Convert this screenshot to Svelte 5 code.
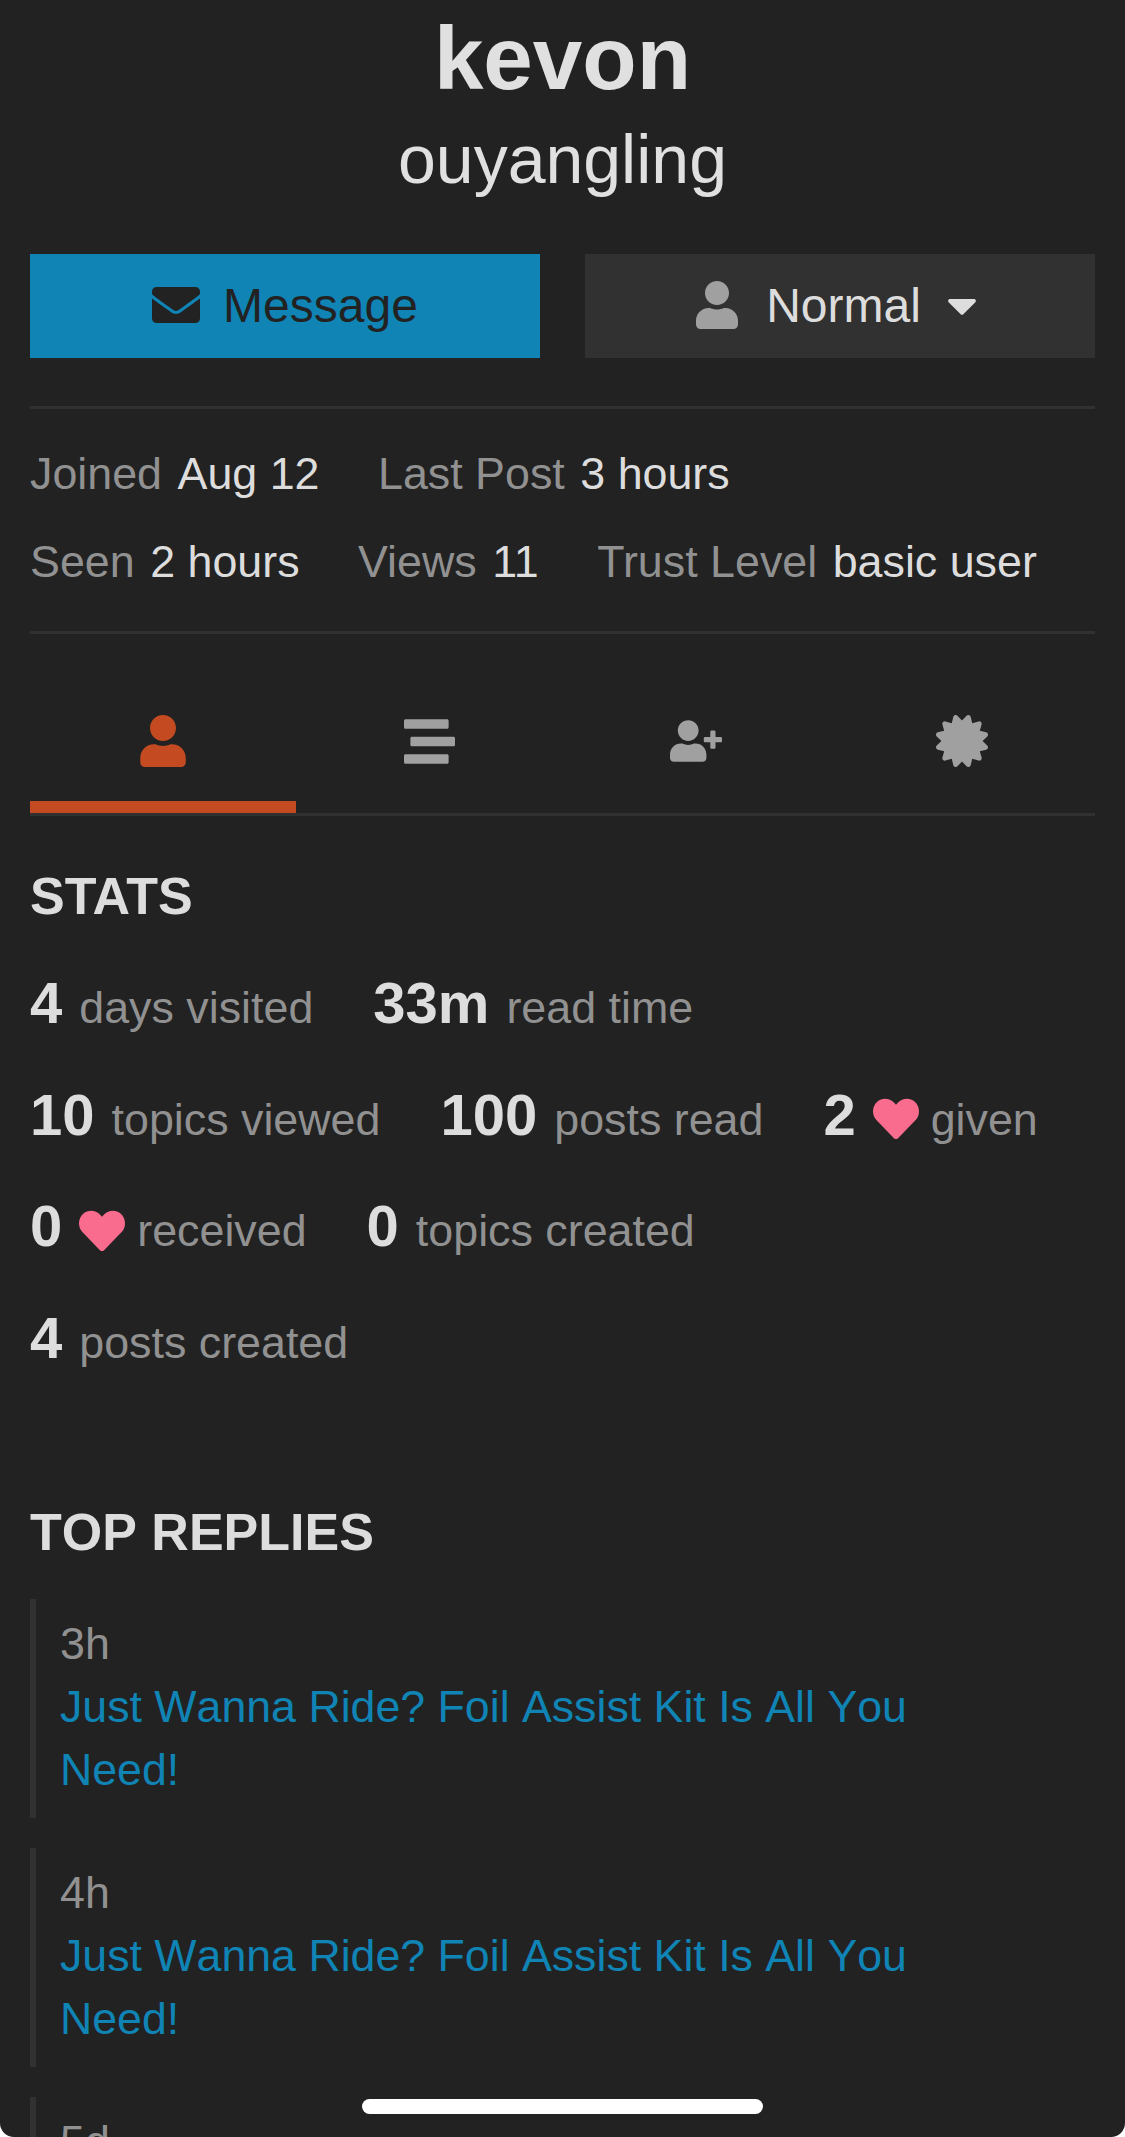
<script>
  const person = "M224 256c70.7 0 128-57.3 128-128S294.7 0 224 0 96 57.3 96 128s57.3 128 128 128zm89.6 32h-16.7c-22.2 10.2-46.9 16-72.9 16s-50.6-5.8-72.9-16h-16.7C60.2 288 0 348.2 0 422.4V464c0 26.5 21.5 48 48 48h352c26.5 0 48-21.5 48-48v-41.6c0-74.2-60.2-134.4-134.4-134.4z";
  const heart = "M462.3 62.6C407.5 15.9 326 24.3 275.7 76.2L256 96.5l-19.7-20.3C186.1 24.3 104.5 15.9 49.7 62.6c-62.8 53.6-66.1 149.8-9.9 207.9l193.5 199.8c12.5 12.9 32.8 12.9 45.3 0l193.5-199.8c56.3-58.1 53-154.3-9.8-207.9z";
  const badge = "M458.622 255.92l45.985-45.005c13.708-12.977 7.316-36.039-10.664-40.339l-62.65-15.99 17.661-62.015c4.991-17.838-11.829-34.663-29.661-29.671l-61.994 17.667-15.984-62.671C337.085.197 313.765-6.276 300.99 7.228L256 53.57 211.011 7.229c-12.63-13.351-36.047-7.234-40.325 10.668l-15.984 62.671-61.995-17.667C74.87 57.907 58.056 74.738 63.046 92.572l17.661 62.015-62.65 15.99C.069 174.878-6.31 197.944 7.392 210.915l45.985 45.005-45.985 45.004c-13.708 12.977-7.316 36.039 10.664 40.339l62.65 15.99-17.661 62.015c-4.991 17.838 11.829 34.663 29.661 29.671l61.994-17.667 15.984 62.671c4.439 18.575 27.696 24.018 40.325 10.668L256 458.61l44.989 46.001c12.5 13.488 35.987 7.486 40.325-10.668l15.984-62.671 61.994 17.667c17.836 4.994 34.651-11.837 29.661-29.671l-17.661-62.015 62.65-15.99c17.987-4.302 24.366-27.367 10.664-40.339l-45.984-45.004z";

  const meta = [
    [["Joined", "Aug 12"], ["Last Post", "3 hours"]],
    [["Seen", "2 hours"], ["Views", "11"], ["Trust Level", "basic user"]]
  ];
  const stats = [
    { n: "4", label: "days visited" },
    { n: "33m", label: "read time" },
    { n: "10", label: "topics viewed" },
    { n: "100", label: "posts read" },
    { n: "2", label: "given", love: true },
    { n: "0", label: "received", love: true },
    { n: "0", label: "topics created" },
    { n: "4", label: "posts created" }
  ];
  const replies = [
    { when: "3h", title: "Just Wanna Ride? Foil Assist Kit Is All You Need!" },
    { when: "4h", title: "Just Wanna Ride? Foil Assist Kit Is All You Need!" },
    { when: "5d", title: "Just Wanna Ride? Foil Assist Kit Is All You Need!" }
  ];
</script>

<div class="page">
  <section class="names">
    <h1>kevon</h1>
    <h2>ouyangling</h2>
  </section>

  <div class="actions">
    <button class="btn primary">
      <svg class="ic-msg" viewBox="0 0 512 512"><path d="M502.3 190.8c3.9-3.1 9.7-.2 9.7 4.7V400c0 26.5-21.5 48-48 48H48c-26.5 0-48-21.5-48-48V195.6c0-5 5.7-7.8 9.7-4.7 22.4 17.4 52.1 39.5 154.1 113.6 21.1 15.4 56.7 47.8 92.2 47.6 35.7.3 72-32.8 92.3-47.6 102-74.1 131.6-96.3 154-113.7zM256 320c23.2.4 56.6-29.2 73.4-41.4 132.7-96.3 142.8-104.7 173.4-128.7 5.8-4.5 9.2-11.5 9.2-18.9v-19c0-26.5-21.5-48-48-48H48C21.5 64 0 85.5 0 112v19c0 7.4 3.4 14.3 9.2 18.9 30.6 23.9 40.7 32.4 173.4 128.7 16.8 12.2 50.2 41.8 73.4 41.4z"/></svg>
      Message
    </button>
    <button class="btn second">
      <svg class="ic-user" viewBox="0 0 448 512"><path d={person}/></svg>
      Normal
      <svg class="ic-caret" viewBox="0 0 320 512"><path d="M31.3 192h257.3c17.8 0 26.7 21.5 14.1 34.1L174.1 354.8c-7.8 7.8-20.5 7.8-28.3 0L17.2 226.1C4.6 213.5 13.5 192 31.3 192z"/></svg>
    </button>
  </div>

  <section class="meta">
    {#each meta as row}
      <div class="meta-row">
        {#each row as item}
          <div><span class="muted">{item[0]}</span><span class="val">{item[1]}</span></div>
        {/each}
      </div>
    {/each}
  </section>

  <nav class="tabs">
    <div class="tab active">
      <svg class="t-user" viewBox="0 0 448 512"><path d={person}/></svg>
    </div>
    <div class="tab">
      <svg class="t-stream" viewBox="0 32 512 448"><path d="M16 128h416c8.84 0 16-7.16 16-16V48c0-8.84-7.16-16-16-16H16C7.16 32 0 39.16 0 48v64c0 8.84 7.16 16 16 16zm480 80H80c-8.84 0-16 7.16-16 16v64c0 8.84 7.16 16 16 16h416c8.84 0 16-7.16 16-16v-64c0-8.84-7.16-16-16-16zm-64 176H16c-8.84 0-16 7.16-16 16v64c0 8.84 7.16 16 16 16h416c8.84 0 16-7.16 16-16v-64c0-8.84-7.16-16-16-16z"/></svg>
    </div>
    <div class="tab">
      <svg class="t-plus" viewBox="0 0 640 512"><path d="M624 208h-64v-64c0-8.8-7.2-16-16-16h-32c-8.8 0-16 7.2-16 16v64h-64c-8.8 0-16 7.2-16 16v32c0 8.8 7.2 16 16 16h64v64c0 8.8 7.2 16 16 16h32c8.8 0 16-7.2 16-16v-64h64c8.8 0 16-7.2 16-16v-32c0-8.8-7.2-16-16-16zm-400 48c70.7 0 128-57.3 128-128S294.7 0 224 0 96 57.3 96 128s57.3 128 128 128zm89.6 32h-16.7c-22.2 10.2-46.9 16-72.9 16s-50.6-5.8-72.9-16h-16.7C60.2 288 0 348.2 0 422.4V464c0 26.5 21.5 48 48 48h352c26.5 0 48-21.5 48-48v-41.6c0-74.2-60.2-134.4-134.4-134.4z"/></svg>
    </div>
    <div class="tab">
      <svg class="t-badge" viewBox="0 0 512 512"><path d={badge}/></svg>
    </div>
  </nav>

  <h3 class="stats-title">STATS</h3>
  <div class="stats">
    {#each stats as s}
      <div class="stat">
        <b>{s.n}</b>
        {#if s.love}
          <svg class="love" viewBox="0 0 512 512"><path d={heart}/></svg>
        {/if}
        <span class="muted">{s.label}</span>
      </div>
    {/each}
  </div>

  <h3 class="replies-title">TOP REPLIES</h3>
  <div class="replies">
    {#each replies as r}
      <div class="reply">
        <div class="muted">{r.when}</div>
        <a href="#top">{r.title}</a>
      </div>
    {/each}
  </div>

  <div class="home"></div>
</div>

<style>
  :global(body) {
    margin: 0;
    background: #fff;
  }

  .page {
    position: relative;
    height: 2137px;
    overflow: hidden;
    border-radius: 0 0 14px 14px;
    background: #222;
    color: #ddd;
    font-family: "Liberation Sans", Arial, sans-serif;
    font-size: 44.8px;
    line-height: 63px;
  }

  .names {
    text-align: center;
    color: #e0e0e0;
  }

  h1 {
    margin: 0;
    padding-top: 10px;
    font-size: 89px;
    line-height: 96px;
    font-weight: bold;
  }

  h2 {
    margin: 8px 0 0;
    font-size: 68px;
    line-height: 90px;
    font-weight: normal;
  }

  .actions {
    display: flex;
    justify-content: space-between;
    margin: 0 30px;
    padding: 50px 0 48px;
    border-bottom: 3px solid #313131;
  }

  .btn {
    width: 510px;
    height: 104px;
    box-sizing: border-box;
    display: flex;
    align-items: center;
    justify-content: center;
    border: none;
    padding: 0 0 2px;
    background: #313131;
    color: #ddd;
    font: inherit;
    font-size: 48px;
  }

  .btn.primary {
    background: #0f84b5;
    color: #222;
  }

  .btn.second {
    padding-right: 7px;
  }

  .btn svg {
    height: 48px;
    fill: currentColor;
  }

  .ic-msg {
    width: 48px;
    margin-right: 23px;
  }

  .ic-user {
    width: 42px;
    margin-right: 28px;
    fill: #a0a0a0 !important;
  }

  .ic-caret {
    width: 30px;
    margin-left: 26px;
  }

  .meta {
    margin: 0 30px;
    padding: 21px 0 26px;
    border-bottom: 3px solid #313131;
  }

  .meta-row {
    display: flex;
    gap: 58.5px;
    height: 87.5px;
    align-items: center;
  }

  .muted {
    color: #919191;
  }

  .val {
    margin-left: 15.5px;
    color: #ddd;
  }

  .tabs {
    display: flex;
    margin: 0 30px;
    border-bottom: 3px solid #313131;
  }

  .tab {
    flex: 1;
    height: 179px;
    box-sizing: border-box;
    padding-top: 35px;
    display: flex;
    align-items: center;
    justify-content: center;
    fill: #a0a0a0;
  }

  .tab.active {
    fill: #c44a22;
    border-bottom: 12px solid #c44a22;
    padding-top: 47px;
  }

  .t-user {
    width: 46px;
    height: 52px;
  }

  .t-stream {
    width: 51px;
    height: 45px;
  }

  .t-plus {
    width: 52px;
    height: 42px;
  }

  .t-badge {
    width: 52px;
    height: 52px;
  }

  h3 {
    margin: 0 30px;
    font-size: 52px;
    font-weight: bold;
    line-height: 60px;
    color: #ddd;
  }

  .stats-title {
    margin-top: 50px;
  }

  .stats {
    display: flex;
    flex-wrap: wrap;
    column-gap: 60px;
    margin: 0 70px 0 30px;
    padding-top: 21px;
  }

  .stat {
    display: flex;
    align-items: baseline;
    height: 111.5px;
    line-height: 111px;
  }

  .stat b {
    font-size: 58px;
    color: #ddd;
    margin-right: 17px;
  }

  .love {
    align-self: center;
    position: relative;
    top: 5px;
    width: 46px;
    height: 46px;
    margin-right: 12px;
    fill: #fa6c8d;
  }

  .replies-title {
    margin-top: 109px;
    font-kerning: none;
  }

  .replies {
    margin: 37px 30px 0;
    display: flex;
    flex-direction: column;
    gap: 30px;
  }

  .reply {
    border-left: 6px solid #313131;
    padding: 13px 140px 17px 24px;
  }

  .reply a {
    display: block;
    color: #0f84b5;
    text-decoration: none;
    font-size: 44.7px;
    font-kerning: none;
  }

  .home {
    position: absolute;
    left: 362px;
    top: 2099px;
    width: 401px;
    height: 15px;
    border-radius: 8px;
    background: #fff;
  }
</style>
